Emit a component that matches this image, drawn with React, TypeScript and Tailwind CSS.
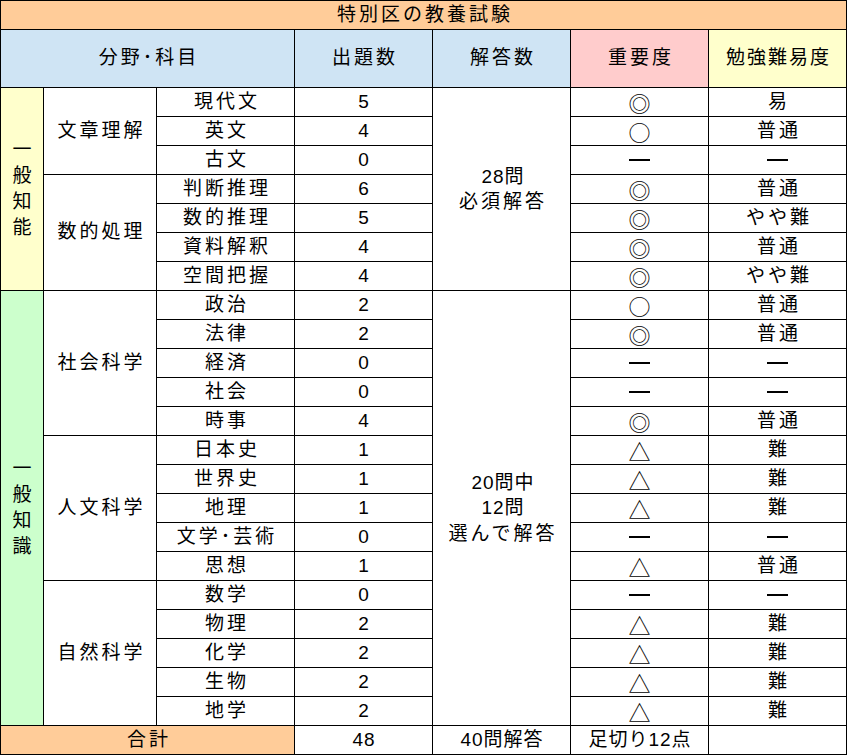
import React from 'react';

const rows: [string, string, string, string][] = [
    ['現代文', '5', '◎', '易'],
    ['英文', '4', '○', '普通'],
    ['古文', '0', '―', '―'],
    ['判断推理', '6', '◎', '普通'],
    ['数的推理', '5', '◎', 'やや難'],
    ['資料解釈', '4', '◎', '普通'],
    ['空間把握', '4', '◎', 'やや難'],
    ['政治', '2', '○', '普通'],
    ['法律', '2', '◎', '普通'],
    ['経済', '0', '―', '―'],
    ['社会', '0', '―', '―'],
    ['時事', '4', '◎', '普通'],
    ['日本史', '1', '△', '難'],
    ['世界史', '1', '△', '難'],
    ['地理', '1', '△', '難'],
    ['文学･芸術', '0', '―', '―'],
    ['思想', '1', '△', '普通'],
    ['数学', '0', '―', '―'],
    ['物理', '2', '△', '難'],
    ['化学', '2', '△', '難'],
    ['生物', '2', '△', '難'],
    ['地学', '2', '△', '難'],
];

const cell = 'flex items-center justify-center bg-white tracking-[3px] pl-[3px]';
const num = 'flex items-center justify-center bg-white tracking-[1px] pl-[1px] text-[19px]';

const Mark = ({ v }: { v: string }) =>
    v === '―'
        ? <span className="block w-[21px] h-[2px] bg-black -ml-[3px]" />
        : <span className="text-[22px] leading-none -ml-[3px] tracking-normal" style={{ fontFamily: '"Noto Sans CJK JP", sans-serif' }}>{v}</span>;

const Vertical = ({ text }: { text: string }) => (
    <div className="flex flex-col items-center leading-[26px]">
        {text.split('').map((c, i) => <span key={i}>{c}</span>)}
    </div>
);

export default function App() {
    const body: React.ReactNode[] = [];
    rows.forEach(([name, count, imp, diff], i) => {
        if (i === 0) body.push(<div key="g1" className={`${cell} row-span-7 !bg-[#ffffcc] !tracking-normal !pl-0`}><Vertical text="一般知能" /></div>);
        if (i === 7) body.push(<div key="g2" className={`${cell} row-span-15 !bg-[#ccffcc] !tracking-normal !pl-0`}><Vertical text="一般知識" /></div>);
        if (i === 0) body.push(<div key="s1" className={`${cell} row-span-3`}>文章理解</div>);
        if (i === 3) body.push(<div key="s2" className={`${cell} row-span-4`}>数的処理</div>);
        if (i === 7) body.push(<div key="s3" className={`${cell} row-span-5`}>社会科学</div>);
        if (i === 12) body.push(<div key="s4" className={`${cell} row-span-5`}>人文科学</div>);
        if (i === 17) body.push(<div key="s5" className={`${cell} row-span-5`}>自然科学</div>);
        body.push(<div key={`n${i}`} className={cell}>{name}</div>);
        body.push(<div key={`c${i}`} className={num}>{count}</div>);
        if (i === 0) body.push(
            <div key="a1" className={`${cell} row-span-7 flex-col leading-[25px]`}>
                <span className="tracking-[1px]">28問</span><span>必須解答</span>
            </div>
        );
        if (i === 7) body.push(
            <div key="a2" className={`${cell} row-span-15 flex-col leading-[25.5px]`}>
                <span className="tracking-[1px]">20問中</span><span className="tracking-[1px]">12問</span><span>選んで解答</span>
            </div>
        );
        body.push(<div key={`m${i}`} className={cell}><Mark v={imp} /></div>);
        body.push(<div key={`d${i}`} className={cell}>{diff === '―' ? <Mark v={diff} /> : diff}</div>);
    });

    return (
        <div className="w-[847px] bg-white text-black" style={{ fontFamily: '"Liberation Sans", "Noto Sans CJK JP", sans-serif' }}>
            <div className="grid grid-cols-[42px_112px_137px_137px_137px_137px_137px] grid-rows-[28px_57px_repeat(22,28px)_28px] gap-px bg-black p-px text-[19px]">
                <div className={`${cell} col-span-7 !bg-[#ffcc99]`}>特別区の教養試験</div>

                <div className={`${cell} col-span-3 !bg-[#cfe4f4]`}>分野･科目</div>
                <div className={`${cell} !bg-[#cfe4f4]`}>出題数</div>
                <div className={`${cell} !bg-[#cfe4f4]`}>解答数</div>
                <div className={`${cell} !bg-[#ffcccc]`}>重要度</div>
                <div className={`${cell} !bg-[#ffffcc] !tracking-[2px] !pl-[2px]`}>勉強難易度</div>

                {body}

                <div className={`${cell} col-span-3 !bg-[#ffcc99]`}>合計</div>
                <div className={num}>48</div>
                <div className={`${cell} !tracking-[1px] !pl-[1px]`}>40問解答</div>
                <div className={`${cell} !tracking-[1px] !pl-[1px]`}>足切り12点</div>
                <div className={cell}></div>
            </div>
        </div>
    );
}
